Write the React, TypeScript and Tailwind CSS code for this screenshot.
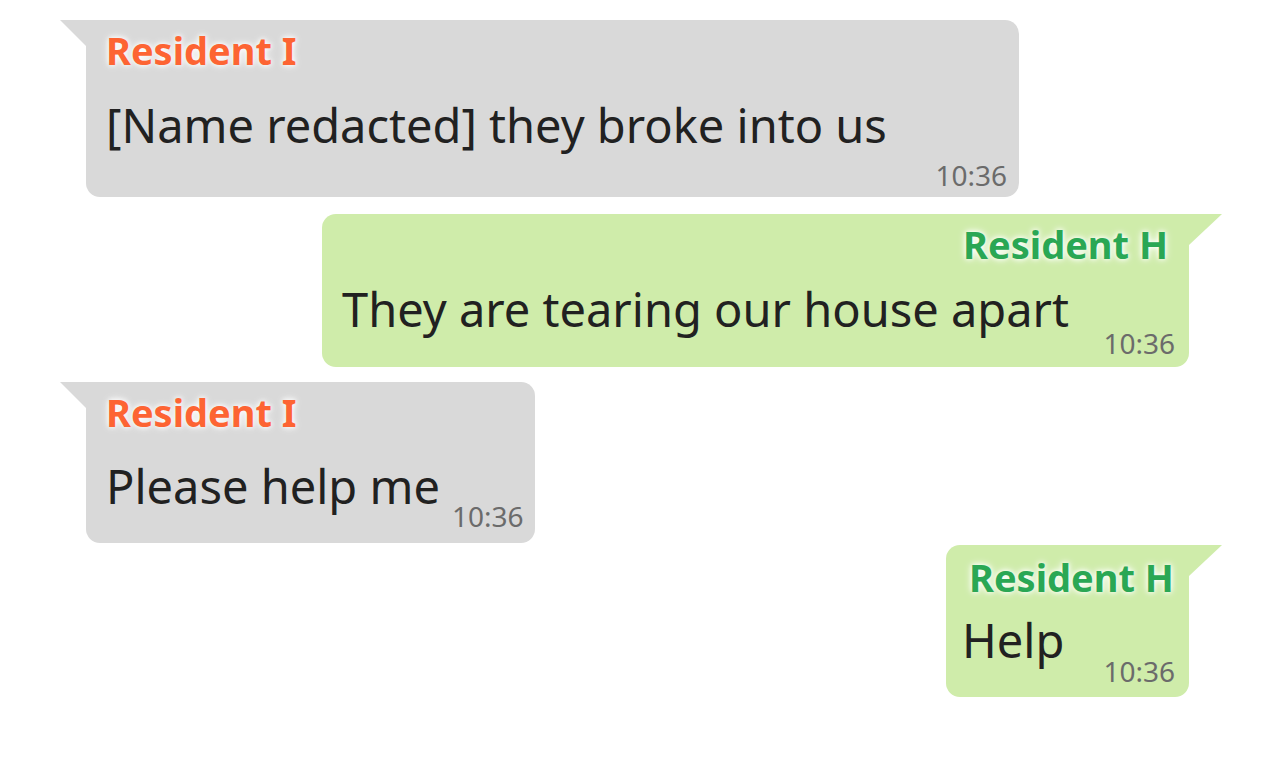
import React from 'react';

type Side = 'left' | 'right';

interface BubbleProps {
  side: Side;
  name: string;
  text: string;
  time: string;
  boxClass: string;
  nameClass: string;
  rowClass: string;
  timeClass: string;
  className?: string;
}

const Tail: React.FC<{ side: Side }> = ({ side }) =>
  side === 'left' ? (
    <svg width="34" height="26" viewBox="0 0 34 26" className="shrink-0">
      <polygon points="8,0 34,0 34,26" fill="#d9d9d9" />
    </svg>
  ) : (
    <svg width="33" height="31" viewBox="0 0 33 31" className="shrink-0">
      <polygon points="0,0 33,0 0,31" fill="#cfecaa" />
    </svg>
  );

const Bubble: React.FC<BubbleProps> = ({
  side,
  name,
  text,
  time,
  boxClass,
  nameClass,
  rowClass,
  timeClass,
  className = '',
}) => {
  const left = side === 'left';
  return (
    <div className={`flex ${left ? 'justify-start pl-[52px]' : 'justify-end pr-[58px]'} ${className}`}>
      {left && <Tail side="left" />}
      <div
        className={`flex flex-col rounded-[14px] ${
          left ? 'bg-[#d9d9d9] rounded-tl-none' : 'bg-[#cfecaa] rounded-tr-none'
        } ${boxClass}`}
      >
        <div
          className={`text-[38px] font-bold leading-[44px] whitespace-nowrap [text-shadow:0_0_5px_#fff,0_0_8px_#fff] ${
            left ? 'text-[#fd6433]' : 'text-[#2aa754]'
          } ${nameClass}`}
        >
          {name}
        </div>
        <div className={`flex items-start justify-between ${rowClass}`}>
          <span className="text-[47px] leading-[52px] text-[#212121] whitespace-nowrap">{text}</span>
          <span className={`text-[28px] leading-[30px] text-[#6b6b6b] ml-3 ${timeClass}`}>{time}</span>
        </div>
      </div>
      {!left && <Tail side="right" />}
    </div>
  );
};

export default function App() {
  return (
    <div
      className="w-[1280px] h-[764px] bg-white overflow-hidden pt-5"
      style={{ fontFamily: '"Noto Sans", "Open Sans", sans-serif' }}
    >
      <Bubble
        side="left"
        name="Resident I"
        text="[Name redacted] they broke into us"
        time="10:36"
        boxClass="w-[933px] pl-5 pr-3 pt-2 pb-[7px]"
        nameClass=""
        rowClass="mt-[27px]"
        timeClass="mt-[61px]"
      />
      <Bubble
        side="right"
        name="Resident H"
        text="They are tearing our house apart"
        time="10:36"
        boxClass="w-[867px] pl-[20px] pr-[14px] pt-2 pb-[9px]"
        nameClass="text-right pr-[7px]"
        rowClass="mt-[17px]"
        timeClass="mt-[45px]"
        className="mt-[17px]"
      />
      <Bubble
        side="left"
        name="Resident I"
        text="Please help me"
        time="10:36"
        boxClass="w-[449px] pl-5 pr-[14px] pt-2 pb-[12px]"
        nameClass=""
        rowClass="mt-[26px]"
        timeClass="mt-[41px]"
        className="mt-[15px]"
      />
      <Bubble
        side="right"
        name="Resident H"
        text="Help"
        time="10:36"
        boxClass="w-[243px] pl-[16px] pr-[14px] pt-[10px] pb-[11px]"
        nameClass="pl-[7px]"
        rowClass="mt-[15px]"
        timeClass="mt-[42px]"
        className="mt-[2px]"
      />
    </div>
  );
}
